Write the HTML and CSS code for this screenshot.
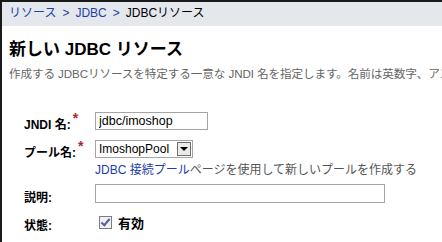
FILE: index.html
```html
<!DOCTYPE html>
<html>

<head>
  <title>新しい JDBC リソース</title>
  <meta charset="utf-8" />
  <link rel="stylesheet" href="styles.css">
</head>

<body>
  <div id="frame">

    <!-- breadcrumb bar -->
    <div class="crumbs">
      <a href="#">リソース</a><span class="sep">&gt;</span><a href="#">JDBC</a><span class="sep">&gt;</span><span class="here">JDBCリソース</span>
    </div>

    <div class="page">
      <h1 class="title">新しい JDBC リソース</h1>
      <p class="help">作成する JDBCリソースを特定する一意な JNDI 名を指定します。名前は英数字、アン</p>

      <table class="form">
        <tr>
          <td class="label">JNDI 名:<span class="req">*</span></td>
          <td><input class="field short" type="text" value="jdbc/imoshop"></td>
        </tr>
        <tr>
          <td class="label">プール名:<span class="req">*</span></td>
          <td>
            <div class="select">
              <span class="value">ImoshopPool</span>
              <span class="arrow"></span>
            </div>
            <div class="note"><a href="#">JDBC 接続プール</a>ページを使用して新しいプールを作成する</div>
          </td>
        </tr>
        <tr>
          <td class="label">説明:</td>
          <td><input class="field long" type="text" value=""></td>
        </tr>
        <tr>
          <td class="label">状態:</td>
          <td class="check"><span class="box"></span><b>有効</b></td>
        </tr>
      </table>
    </div>

  </div>
</body>
</html>
```

FILE: styles.css
```css
* {
  margin: 0px;
  padding: 0px;
}

body {
  font-family: "Liberation Sans", "Noto Sans CJK JP", sans-serif;
  font-size: 12px;
  color: #000;
  background: #fff;
}

#frame {
  width: 440px;
  height: 240px;
  border-top: 2px solid #1a1a1a;
  border-left: 2px solid #1a1a1a;
  overflow: hidden;
}

.crumbs {
  height: 24px;
  line-height: 22px;
  padding-left: 7px;
  background: #e4e7eb;
}

.crumbs a {
  color: #1d40a8;
  text-decoration: none;
}

.crumbs .sep {
  color: #1d40a8;
  margin: 0 6px;
}

.page {
  padding-left: 7px;
}

.title {
  font-size: 17px;
  font-weight: bold;
  margin-top: 13px;
  line-height: 22px;
}

.help {
  color: #666;
  margin-top: 4px;
  font-size: 11.6px;
  letter-spacing: -0.1px;
  white-space: nowrap;
}

.form {
  border-collapse: collapse;
  margin-top: 27px;
  margin-left: 15px;
}

.form td {
  vertical-align: top;
  padding: 4px 0;
}

.form .label {
  width: 71px;
  font-weight: bold;
  padding-top: 7px;
}

.req {
  color: #b0262a;
  font-size: 14px;
  vertical-align: top;
  position: relative;
  top: -5px;
  margin-left: 2px;
}

.field {
  font-family: "Liberation Sans", "Noto Sans CJK JP", sans-serif;
  font-size: 12.5px;
  height: 16px;
  border: 1px solid #a5a5a5;
  padding: 0 3px;
  display: block;
}

.short {
  width: 105px;
}

.long {
  width: 282px;
  height: 17px;
  margin-top: -1px;
}

.select {
  width: 98px;
  height: 18px;
  border: 1px solid #a5a5a5;
  display: flex;
  align-items: center;
  justify-content: space-between;
  box-sizing: border-box;
}

.select .value {
  padding-left: 3px;
  font-size: 12px;
}

.select .arrow {
  width: 14px;
  height: 14px;
  margin-right: 1px;
  border: 1px solid #6e6e6e;
  box-sizing: border-box;
  background: #eceae6;
  display: flex;
  align-items: center;
  justify-content: center;
}

.select .arrow:after {
  content: "";
  border-left: 4px solid transparent;
  border-right: 4px solid transparent;
  border-top: 4px solid #000;
}

.note {
  color: #555;
  margin-top: 2px;
}

.note a {
  color: #1d40a8;
  text-decoration: none;
}

.form .status {
  padding-top: 5px;
}

.check {
  display: flex;
  align-items: center;
  padding-top: 1px;
}

.check .box {
  width: 11px;
  height: 11px;
  border: 1px solid #7c7c7c;
  background: #f1f1f1;
  margin: 0 6px 0 4px;
  position: relative;
}

.check .box:after {
  content: "";
  position: absolute;
  left: 3px;
  top: 0px;
  width: 3px;
  height: 7px;
  border-right: 2px solid #4a5ea0;
  border-bottom: 2px solid #4a5ea0;
  transform: rotate(40deg);
}

.check b {
  font-size: 13px;
}
```
